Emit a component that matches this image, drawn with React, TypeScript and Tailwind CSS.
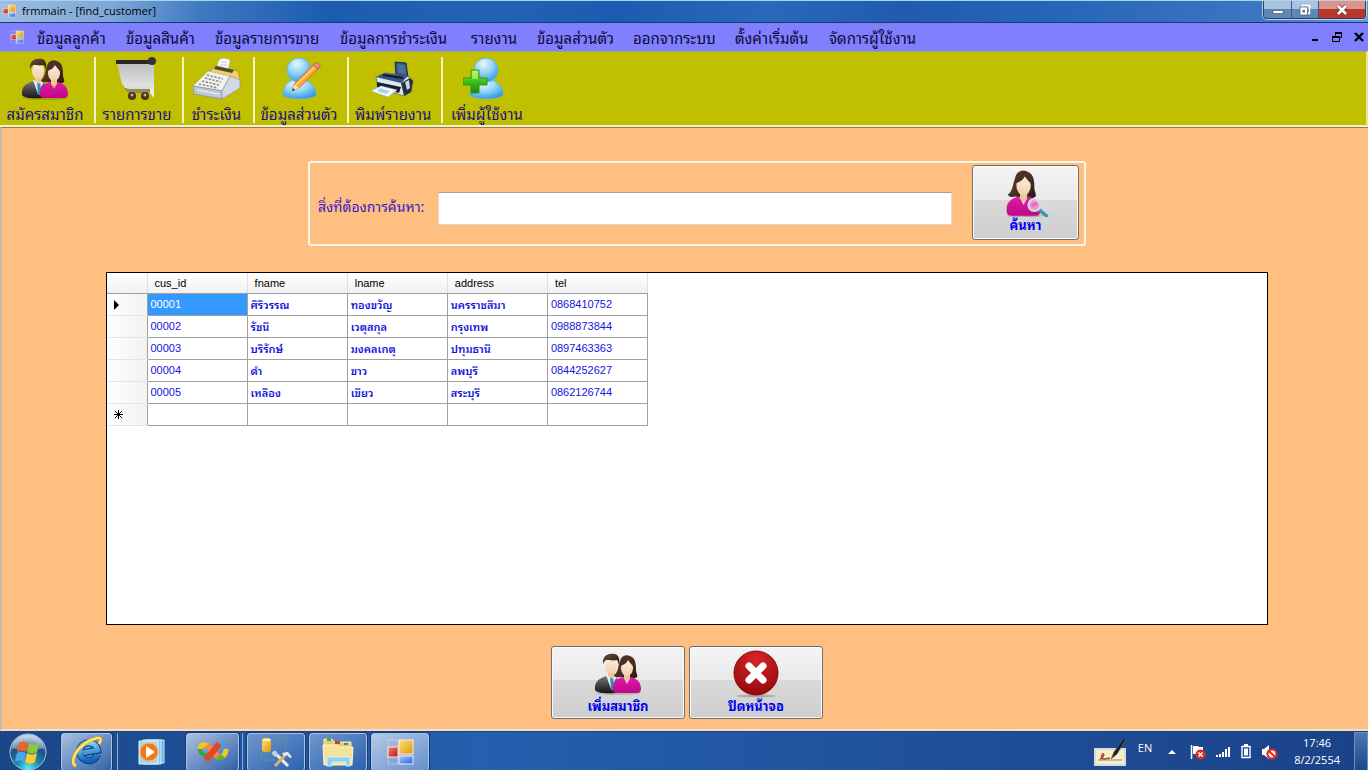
import type { ReactNode } from "react";

const menuItems = [
  "ข้อมูลลูกค้า",
  "ข้อมูลสินค้า",
  "ข้อมูลรายการขาย",
  "ข้อมูลการชำระเงิน",
  "รายงาน",
  "ข้อมูลส่วนตัว",
  "ออกจากระบบ",
  "ตั้งค่าเริ่มต้น",
  "จัดการผู้ใช้งาน",
];

const columns = ["cus_id", "fname", "lname", "address", "tel"];

const customers = [
  ["00001", "ศิริวรรณ", "ทองขวัญ", "นครราชสีมา", "0868410752"],
  ["00002", "รัชนี", "เวตุสกุล", "กรุงเทพ", "0988873844"],
  ["00003", "บริรักษ์", "มงคลเกตุ", "ปทุมธานี", "0897463363"],
  ["00004", "ดำ", "ขาว", "ลพบุรี", "0844252627"],
  ["00005", "เหลือง", "เขียว", "สระบุรี", "0862126744"],
];

/* shared gradients, referenced by id from every icon */
const Gradients = () => (
  <svg className="absolute h-0 w-0" aria-hidden="true">
    <defs>
      <linearGradient id="hair" x1="0" y1="0" x2="1" y2="1">
        <stop offset="0" stopColor="#6b4a38" />
        <stop offset="1" stopColor="#2a1812" />
      </linearGradient>
      <linearGradient id="pink" x1="0" y1="0" x2="0" y2="1">
        <stop offset="0" stopColor="#e01aa8" />
        <stop offset="1" stopColor="#c00888" />
      </linearGradient>
      <linearGradient id="suit" x1="0" y1="0" x2="0" y2="1">
        <stop offset="0" stopColor="#777" />
        <stop offset="1" stopColor="#151515" />
      </linearGradient>
      <linearGradient id="skin" x1="0" y1="0" x2="0" y2="1">
        <stop offset="0" stopColor="#fdeedd" />
        <stop offset="1" stopColor="#f3cfa9" />
      </linearGradient>
      <linearGradient id="cart" x1="0" y1="0" x2="0" y2="1">
        <stop offset="0" stopColor="#bdbdbd" />
        <stop offset="1" stopColor="#f4f4f4" />
      </linearGradient>
      <radialGradient id="sky" cx="0.4" cy="0.25" r="0.8">
        <stop offset="0" stopColor="#e6f8ff" />
        <stop offset="0.5" stopColor="#8fd2f8" />
        <stop offset="1" stopColor="#2a94e8" />
      </radialGradient>
      <linearGradient id="plus" x1="0" y1="0" x2="0" y2="1">
        <stop offset="0" stopColor="#b4f04a" />
        <stop offset="0.5" stopColor="#3fc01c" />
        <stop offset="1" stopColor="#168a0c" />
      </linearGradient>
      <radialGradient id="red" cx="0.5" cy="0.2" r="0.9">
        <stop offset="0" stopColor="#d8262a" />
        <stop offset="1" stopColor="#8e0508" />
      </radialGradient>
      <radialGradient id="orb" cx="0.5" cy="0.95" r="0.9">
        <stop offset="0" stopColor="#5af0f8" />
        <stop offset="0.35" stopColor="#1e88b0" />
        <stop offset="0.7" stopColor="#1c4f80" />
        <stop offset="1" stopColor="#b8cfe4" />
      </radialGradient>
      <linearGradient id="gold" x1="0" y1="0" x2="1" y2="1">
        <stop offset="0" stopColor="#ffe27a" />
        <stop offset="1" stopColor="#dc9604" />
      </linearGradient>
      <linearGradient id="blue" x1="0" y1="0" x2="1" y2="1">
        <stop offset="0" stopColor="#a8c6ff" />
        <stop offset="1" stopColor="#2c5ed8" />
      </linearGradient>
      <linearGradient id="brick" x1="0" y1="0" x2="1" y2="1">
        <stop offset="0" stopColor="#f08878" />
        <stop offset="1" stopColor="#b41414" />
      </linearGradient>
      <linearGradient id="iebody" x1="0" y1="0" x2="0" y2="1">
        <stop offset="0" stopColor="#8ad4f8" />
        <stop offset="1" stopColor="#0f62bc" />
      </linearGradient>
    </defs>
  </svg>
);

const FormIcon = ({ className = "h-3.5 w-3.5" }) => (
  <svg viewBox="0 0 28 28" className={className} aria-hidden="true">
    <path d="M2 2h10v24H2z" fill="none" stroke="#d8d4dc" strokeDasharray="2 1.500" />
    <rect x="13" y="2" width="14" height="14" fill="url(#gold)" stroke="#fff0c8" />
    <rect x="2" y="9" width="10" height="10" fill="url(#brick)" stroke="#ffe0dc" />
    <rect x="13" y="18" width="14" height="8" fill="url(#blue)" stroke="#e8eeff" />
  </svg>
);

const Woman = () => (
  <g>
    <path d="M26 9c1-5 6-7 10-5 6 2 6 9 6 14 0 3 2 5 1 7-4 3-8 1-10 1l-7-1c-3 1-6 0-6-2 4-2 4-9 6-14z" fill="url(#hair)" />
    <path d="M30 20h6v9h-6z" fill="#eec49c" />
    <ellipse cx="33" cy="16" rx="6" ry="8" fill="url(#skin)" />
    <path d="M26 14c4-1 7-3 8-6 2 3 4 5 6 7 0-7-3-11-7-11s-7 4-7 10z" fill="#4a2f24" />
    <path d="M19 38c-1-8 3-11 10-13l4 7 4-7c7 2 10 6 10 12 0 3-2 4-4 4H23c-2 0-4-1-4-3z" fill="url(#pink)" />
  </g>
);

const PeopleIcon = () => (
  <svg viewBox="0 0 48 44" className="h-11 w-12 shrink-0" aria-hidden="true">
    <ellipse cx="24" cy="41" rx="22" ry="2" fill="#000" opacity="0.15" />
    <path d="M1 38c-1-8 4-12 12-14h6c5 2 8 6 8 16-8 2-24 2-26-2z" fill="url(#suit)" />
    <path d="M12 23l5 14 6-13z" fill="#e8eef4" />
    <path d="M16 25h3l2 13h-4z" fill="#2d8fb0" />
    <path d="M14 17h7v7l-3 3-4-3z" fill="#eec49c" />
    <ellipse cx="17" cy="14" rx="6" ry="8" fill="url(#skin)" />
    <path d="M9 12C8 3 15 1 21 2c4 1 5 6 4 11-1-2-1-4-2-5-4 1-8 0-11 0-2 1-2 3-3 4z" fill="url(#hair)" />
    <Woman />
  </svg>
);

const FindWomanIcon = () => (
  <svg viewBox="16 2 38 40" className="h-12 w-12 shrink-0" aria-hidden="true">
    <ellipse cx="34" cy="41" rx="15" ry="1" fill="#000" opacity="0.2" />
    <Woman />
    <path d="M46 36l6 5" stroke="#3a96b0" strokeWidth="3" strokeLinecap="round" />
    <circle cx="42" cy="32" r="5" fill="#f6c6e8" fillOpacity="0.75" stroke="#d8dde2" strokeWidth="1.600" />
    <path d="M39 33c1-4 3-4 6-3-1 3-3 5-6 3z" fill="#e85ab8" opacity="0.7" />
  </svg>
);

const CartIcon = () => (
  <svg viewBox="0 0 48 44" className="h-11 w-12 shrink-0" aria-hidden="true">
    <path d="M4 6h37v35l-4-5H15l-4-7-2-2z" fill="url(#cart)" />
    <path d="M11 31h26v5H15z" fill="#8f8f60" />
    <path d="M14 29h24v3H14z" fill="#dcdcd4" />
    <path d="M3 3h34v4H3z" fill="#292725" />
    <circle cx="39" cy="4" r="4" fill="#353230" />
    <circle cx="19" cy="39" r="4" fill="#4a3418" />
    <circle cx="32" cy="39" r="4" fill="#4a3418" />
    <circle cx="19" cy="38" r="1.500" fill="#b8b0a0" />
    <circle cx="32" cy="38" r="1.500" fill="#b8b0a0" />
  </svg>
);

const RegisterIcon = () => (
  <svg viewBox="0 0 48 44" className="h-11 w-12 shrink-0" aria-hidden="true">
    <path d="M23 12l3-9c3-2 6-2 11 0l-2 10z" fill="#fbfbfb" stroke="#c8c8c0" strokeWidth="0.7" />
    <path d="M28 5h6M27 8h7" stroke="#bbb" strokeWidth="0.8" />
    <path d="M15 15l8-6 22 5 2 8-3 5-18-6z" fill="#f0d060" stroke="#a08430" strokeWidth="0.7" />
    <path d="M21 12l18 4 2-3-18-4z" fill="#4b4a3c" />
    <path d="M0 29l15-15 22 5-8 15z" fill="#f2f1ea" stroke="#aaa99c" strokeWidth="0.7" />
    <path d="M0 29l29 5v8L1 37z" fill="#bcc9dc" stroke="#7e8ba0" strokeWidth="0.7" />
    <path d="M29 34l8-15 10 4v8L29 42z" fill="#d3d9e2" stroke="#8c96a6" strokeWidth="0.7" />
    <path d="M14 18l16 4M12 21l16 4M9 24l17 4M6 27l19 4" stroke="#8a8e94" strokeWidth="1.600" strokeDasharray="2.400 1.400" />
    <path d="M4 33l22 4" stroke="#f2f6fa" strokeWidth="1" />
  </svg>
);

const Person = () => (
  <g stroke="#58b0e8" strokeWidth="0.8">
    <path d="M8 38c0-10 6-16 16-16s17 7 17 16c-4 5-28 5-33 0z" fill="url(#sky)" />
    <circle cx="24" cy="13" r="12" fill="url(#sky)" />
  </g>
);

const ProfileIcon = () => (
  <svg viewBox="0 0 48 44" className="h-11 w-12 shrink-0" aria-hidden="true">
    <Person />
    <path d="M17 34l2-7L38 8l5 4-19 19z" fill="#f9a436" stroke="#bd6817" strokeWidth="0.7" />
    <path d="M21 28L40 10" stroke="#ffd78a" strokeWidth="1.500" />
    <path d="M17 34l2-7 5 4z" fill="#fbe0b8" />
    <path d="M17 34l1-3 2 2z" fill="#333" />
    <path d="M38 8l2-2c3-1 6 2 5 4l-2 2z" fill="#ee8888" stroke="#c0504c" strokeWidth="0.7" />
  </svg>
);

const AddUserIcon = () => (
  <svg viewBox="4 0 48 44" className="h-11 w-12 shrink-0" aria-hidden="true">
    <g transform="translate(3 0)">
      <Person />
    </g>
    <path d="M12 13h8v8h8v7h-8v8h-8v-8H4v-7h8z" fill="url(#plus)" stroke="#2c9818" />
    <path d="M13 14h6v8h-6z" fill="#ccf880" opacity="0.5" />
  </svg>
);

const PrinterIcon = () => (
  <svg viewBox="0 0 48 44" className="h-11 w-12 shrink-0" aria-hidden="true">
    <path d="M26 5l11 1 2 14-12-2z" fill="#31517e" stroke="#1c2e4c" />
    <path d="M28 7l8 1 1 9-8-1z" fill="#4a6e9e" />
    <path d="M7 20l9-4 22 3 6 4-2 12-7 4-26-8z" fill="#dfe7ef" stroke="#4c5c70" strokeWidth="0.7" />
    <path d="M7 20l9-4 23 3-7 7z" fill="#35557e" />
    <path d="M14 18l20 3" stroke="#0e1a2c" strokeWidth="2" />
    <path d="M32 26l9-5 3 3-2 11-7 4z" fill="#26303e" />
    <path d="M36 25l4-2 1 8-3 2z" fill="#c8d4e0" />
    <path d="M8 25l24 5-2 6-22-6z" fill="#16202e" />
    <path d="M12 29l16 4-9 7-17-6z" fill="#f4faff" stroke="#9cb4c8" strokeWidth="0.7" />
    <path d="M11 31l10 3-4 3-9-3z" fill="#a8d4f0" />
  </svg>
);

const CloseCircleIcon = () => (
  <svg viewBox="0 0 48 48" className="h-12 w-12 shrink-0" aria-hidden="true">
    <ellipse cx="24" cy="46" rx="20" ry="1.500" fill="#000" opacity="0.2" />
    <circle cx="24" cy="23" r="22" fill="url(#red)" stroke="#84080a" />
    <path d="M17 16l14 14M31 16L17 30" stroke="#fff" strokeWidth="7" strokeLinecap="round" />
  </svg>
);

const toolbar = [
  { label: "สมัครสมาชิก", icon: <PeopleIcon /> },
  { label: "รายการขาย", icon: <CartIcon /> },
  { label: "ชำระเงิน", icon: <RegisterIcon /> },
  { label: "ข้อมูลส่วนตัว", icon: <ProfileIcon /> },
  { label: "พิมพ์รายงาน", icon: <PrinterIcon /> },
  { label: "เพิ่มผู้ใช้งาน", icon: <AddUserIcon /> },
];

const TitleBar = () => (
  <header className="flex h-[23px] items-start justify-between border-t border-b border-t-[#a9d4f0] border-b-[#16387c] bg-[linear-gradient(100deg,#9dbde2_0%,#7fa8d8_8%,#3d78c0_15%,#1c5cb0_24%,#2462b6_36%,#1d5bb2_45%,#2a68ba_56%,#1f5cae_66%,#2866b8_78%,#3c78c2_93%,#6d9ad0_100%)] pr-0.5 pl-0.5">
    <div className="flex h-5 items-center gap-1.5">
      <FormIcon />
      <h1 className="font-['Open_Sans',sans-serif] text-[11px] leading-5 text-black">
        frmmain - [find_customer]
      </h1>
    </div>
    <div className="flex h-[18px] overflow-hidden rounded-b border border-t-0 border-[#26406c] shadow-[0_0_0_1px_#b8cfe8]">
      <button aria-label="Minimize" className="flex w-7 items-center justify-center border-r border-[#3c5880] bg-linear-to-b from-[#a9c4e0] from-50% to-[#5f86b4] to-50%">
        <svg viewBox="0 0 12 12" className="h-3 w-3"><path d="M1 6.500h10v3H1z" fill="#fff" stroke="#4a5a70" strokeWidth="0.7" /></svg>
      </button>
      <button aria-label="Restore" className="flex w-[27px] items-center justify-center border-r border-[#3c5880] bg-linear-to-b from-[#a9c4e0] from-50% to-[#5f86b4] to-50%">
        <svg viewBox="0 0 14 14" className="h-3.5 w-3.5">
          <path d="M4.500 2.500h7v8h-7z" fill="none" stroke="#fff" strokeWidth="1.500" />
          <path d="M2 4h7.500v8H2z" fill="#fff" stroke="#4a5a70" strokeWidth="0.7" />
          <path d="M4.500 7h2.500v2.500H4.500z" fill="#5d7390" />
        </svg>
      </button>
      <button aria-label="Close" className="flex w-[46px] items-center justify-center bg-linear-to-b from-[#dc9488] from-50% to-[#b8362a] to-50%">
        <svg viewBox="0 0 14 12" className="h-3 w-3.5">
          <path d="M3 2l8 8M11 2l-8 8" stroke="#5c3434" strokeWidth="4" />
          <path d="M3 2l8 8M11 2l-8 8" stroke="#fff" strokeWidth="2.600" />
        </svg>
      </button>
    </div>
  </header>
);

const MenuBar = () => (
  <nav className="flex h-7 items-center justify-between bg-[#8080ff] pr-1 pl-2.5">
    <div className="flex items-center">
      <FormIcon className="mr-[13px] h-3.5 w-3.5" />
      <div className="grid grid-cols-[89px_89px_125px_131px_66px_96px_102px_94px_auto] justify-items-start">
        {menuItems.map((item) => (
          <button key={item} className="whitespace-nowrap text-[15px] leading-7 text-[#0c0838]">
            {item}
          </button>
        ))}
      </div>
    </div>
    <div className="flex items-center gap-3 text-black">
      <button aria-label="Minimize child">
        <svg viewBox="0 0 10 10" className="h-2.5 w-2.5"><path d="M2 7h6v2H2z" /></svg>
      </button>
      <button aria-label="Restore child">
        <svg viewBox="0 0 10 10" className="h-2.5 w-2.5" fill="none" stroke="#000">
          <path d="M3.500 3.500V1.500h6v4h-2" />
          <path d="M3 1h7" strokeWidth="2" />
          <path d="M.5 4.500h7v5h-7z" />
          <path d="M0 5h8" strokeWidth="2" />
        </svg>
      </button>
      <button aria-label="Close child">
        <svg viewBox="0 0 10 10" className="h-2.5 w-2.5"><path d="M1 1l8 8M9 1L1 9" stroke="#000" strokeWidth="2.400" /></svg>
      </button>
    </div>
  </nav>
);

const ToolBar = () => (
  <div className="grid h-[76px] grid-cols-[96px_88px_71px_94px_94px_92px] border-t border-r-2 border-b-2 border-t-[#a8a468] border-r-[#e8e4a0] border-b-[#f4f0c0] bg-[#c0c000] pt-[5px]">
    {toolbar.map(({ label, icon }, i) => (
      <button
        key={label}
        className={`flex h-[66px] flex-col items-center justify-start whitespace-nowrap pr-1 text-[15px] text-[#20107c] ${
          i < toolbar.length - 1 ? "border-r-2 border-[#f4f2c8]" : ""
        }`}
      >
        {icon}
        <span className="leading-6">{label}</span>
      </button>
    ))}
  </div>
);

type ActionProps = { label: string; icon: ReactNode; className: string };

const ActionButton = ({ label, icon, className }: ActionProps) => (
  <button
    className={`flex flex-col items-center justify-start rounded-[3px] border border-[#707070] bg-[linear-gradient(#f4f4f4_0%,#e9e9e9_46%,#dadada_47%,#cecece_100%)] pt-[3px] text-[13px] font-bold text-[#0000f0] shadow-[inset_0_0_0_1px_#fafafa] ${className}`}
  >
    <span className="flex h-12 items-center">{icon}</span>
    <span className="leading-4">{label}</span>
  </button>
);

const CustomerGrid = () => (
  <div className="min-h-[353px] flex-1 border border-black bg-white">
    <table className="w-[541px] table-fixed border-collapse text-left text-[11px]">
      <thead className="font-['Liberation_Sans',sans-serif]">
        <tr className="h-5 bg-linear-to-b from-white to-[#f0f0f2]">
          <th className="w-10 border-r border-b border-r-[#e0e0e4] border-b-[#a0a0a0]"></th>
          {columns.map((name) => (
            <th key={name} className="border-r border-b border-r-[#e0e0e4] border-b-[#a0a0a0] py-0 pl-[7px] font-normal leading-5 text-black">
              {name}
            </th>
          ))}
        </tr>
      </thead>
      <tbody className="text-[#1414dc]">
        {customers.map((row, r) => (
          <tr key={row[0]} className="h-[22px]">
            <th className="border-r border-b border-r-[#a0a0a0] border-b-[#e4e4e8] bg-linear-to-r from-white to-[#f1f2f4] p-0 pl-[7px]">
              {r === 0 && (
                <svg viewBox="0 0 5 10" className="h-2.5 w-[5px]"><path d="M0 0l5 5-5 5z" /></svg>
              )}
            </th>
            {row.map((cell, c) => (
              <td
                key={columns[c]}
                className={`whitespace-nowrap border border-[#a0a0a0] px-[3px] pt-0 pb-0.5 leading-4 ${
                  r === 0 && c === 0 ? "bg-[#3399ff] text-white" : ""
                } ${c === 0 || c === 4 ? "font-['Liberation_Sans',sans-serif]" : "font-semibold"}`}
              >
                {cell}
              </td>
            ))}
          </tr>
        ))}
        <tr className="h-[22px]">
          <th className="border-r border-b border-r-[#a0a0a0] border-b-[#e4e4e8] bg-linear-to-r from-white to-[#f1f2f4] p-0 pl-[7px]">
            <svg viewBox="0 0 9 9" className="h-[9px] w-[9px]">
              <path d="M4.500 0v9M0 4.500h9M1 1l7 7M8 1L1 8" stroke="#000" />
            </svg>
          </th>
          {columns.map((name) => (
            <td key={name} className="border border-[#a0a0a0]"></td>
          ))}
        </tr>
      </tbody>
    </table>
  </div>
);

const StartOrb = () => (
  <svg viewBox="0 0 38 38" className="h-[38px] w-[38px]" aria-hidden="true">
    <circle cx="19" cy="19" r="18" fill="url(#orb)" stroke="#a4c4de" />
    <path d="M3 15C5 6 12 3 19 3s14 3 16 12c-9 3-23 3-32 0z" fill="#fff" opacity="0.3" />
    <path d="M10 10c3-2 6-2 9 0l-2 9c-3-2-6-2-9 0z" fill="#f2602a" />
    <path d="M20 10c3 2 6 2 10 0l-2 9c-3 2-7 2-10 0z" fill="#8cc83c" />
    <path d="M8 20c3-2 6-2 9 0l-2 9c-3-2-6-2-9 0z" fill="#48a8ec" />
    <path d="M18 20c3 2 6 2 10 0l-2 9c-3 2-7 2-10 0z" fill="#fccc30" />
  </svg>
);

const IeIcon = () => (
  <svg viewBox="0 0 32 32" className="h-8 w-8" aria-hidden="true">
    <g fill="none" transform="rotate(-10 17 17)">
      <path d="M26 20a9 9 0 1 1 1-4H12" stroke="#0a3c80" strokeWidth="7" />
      <path d="M26 20a9 9 0 1 1 1-4H12" stroke="url(#iebody)" strokeWidth="5" />
    </g>
    <path d="M5 30C-3 27 6 7 26 2c5-1 4 3 2 6" fill="none" stroke="#c89a14" strokeWidth="3.600" />
    <path d="M5 30C-3 27 6 7 26 2c5-1 4 3 2 6" fill="none" stroke="#ffe468" strokeWidth="2.400" />
  </svg>
);

const MediaIcon = () => (
  <svg viewBox="0 0 28 28" className="h-7 w-7" aria-hidden="true">
    <path d="M8 2h18v23H8z" fill="#6aaede" stroke="#c8e6f8" />
    <path d="M5 2h18v24H5z" fill="#8cc6ea" stroke="#d8eefa" />
    <path d="M1 3h19v23H1z" fill="#a8d4ee" stroke="#e4f4fc" />
    <circle cx="11" cy="14" r="9" fill="#f07818" stroke="#ffb468" />
    <path d="M8 8l9 6-9 6z" fill="#fff" />
  </svg>
);

const StudioIcon = () => (
  <svg viewBox="0 0 32 22" className="h-[22px] w-8" aria-hidden="true" fill="none" strokeWidth="5">
    <path d="M13 8C10 2 3 2 3 8" stroke="#f8c020" />
    <path d="M3 8c0 6 6 8 11 4" stroke="#3aa444" strokeWidth="4" />
    <path d="M20 5c4-3 9-1 9 4" stroke="#4c98e4" strokeWidth="4" />
    <path d="M29 8c0 5-2 7-5 8" stroke="#f4c81c" />
    <path d="M26 15c-3 3-6 2-8-1" stroke="#5ab434" />
    <path d="M10 4l11 12" stroke="#f8844c" strokeWidth="6" />
    <path d="M9 19L22 3" stroke="#e4481c" strokeWidth="6" />
  </svg>
);

const DatabaseToolsIcon = () => (
  <svg viewBox="0 0 32 32" className="h-8 w-8" aria-hidden="true">
    <path d="M14 3h12v11M2 16v8h12" fill="none" stroke="#58b070" strokeDasharray="2 1.500" />
    <path d="M2 4v10c0 3 9 3 9 0V4z" fill="url(#gold)" />
    <ellipse cx="6.500" cy="4" rx="4.500" ry="2" fill="#fff0a0" stroke="#d8a828" strokeWidth="0.6" />
    <path d="M14 16l14 14" stroke="#e8edf2" strokeWidth="3" />
    <path d="M27 17L15 30" stroke="#d8b46c" strokeWidth="3" />
    <path d="M22 17l6-1 4 5-2 1-3-3-3 1z" fill="#e6ebf0" />
    <path d="M12 18c0-3 2-4 4-3l2 4-3 2z" fill="#c8d2dc" />
  </svg>
);

const FolderIcon = () => (
  <svg viewBox="0 0 32 30" className="h-[30px] w-8" aria-hidden="true">
    <path d="M2 2h8l2 3h17v20H2z" fill="#e8cc74" stroke="#f8eebc" />
    <path d="M5 1h4v3H5z" fill="#3cac50" />
    <path d="M13 4h5v3h-5z" fill="#c04830" />
    <path d="M22 6h4v2h-4z" fill="#3c80cc" />
    <path d="M1 8h13l3 2h14l-1 18H2z" fill="#f6e39a" stroke="#fff4c4" />
    <path d="M5 29V20h23v9h-4v-4H10v4z" fill="#8ed0ee" stroke="#d4f0fa" />
  </svg>
);

const taskButton =
  "flex h-[38px] items-center justify-center rounded-[3px] border border-[#a9c3e4] shadow-[0_0_0_1px_#143a78]";

const TaskBar = () => (
  <footer className="flex h-10 items-center justify-between border-t border-[#27406c] bg-linear-to-r from-[#1a4587] via-[#2460ae] via-35% to-[#1b4288] text-white">
    <div className="flex items-center gap-1">
      <button aria-label="Start" className="mr-2.5 ml-[9px]"><StartOrb /></button>
      <button aria-label="Internet Explorer" className={`${taskButton} w-[51px] bg-linear-to-br from-[#a9bfe0] to-[#3463a8]`}>
        <IeIcon />
      </button>
      <div className="-ml-1 h-[38px] w-1.5 border-r border-[#8cacd6]" />
      <button aria-label="Media Player" className="flex h-[38px] w-[60px] items-center justify-center"><MediaIcon /></button>
      <button aria-label="Visual Studio" className={`${taskButton} w-[53px] bg-linear-to-br from-[#aec2e2] to-[#2f60a8]`}>
        <StudioIcon />
      </button>
      <div className="-ml-1 h-[38px] w-1 border-r border-[#8cacd6]" />
      <button aria-label="SQL Server" className={`${taskButton} w-[58px] bg-linear-to-br from-[#6f96cc] to-[#2c62b0]`}>
        <DatabaseToolsIcon />
      </button>
      <button aria-label="Explorer" className={`${taskButton} w-[58px] bg-linear-to-br from-[#6f96cc] to-[#2c62b0]`}>
        <FolderIcon />
      </button>
      <button aria-label="frmmain" className={`${taskButton} w-[58px] bg-linear-to-br from-[#b4cae8] to-[#6890ca]`}>
        <FormIcon className="h-7 w-7" />
      </button>
    </div>
    <div className="flex h-full items-center gap-2.5 font-['Open_Sans',sans-serif] text-[11px]">
      <svg viewBox="0 0 34 30" className="h-[30px] w-[34px]" aria-hidden="true">
        <path d="M1 12h30v16H1z" fill="#f4efc8" stroke="#d8dcdc" strokeWidth="2" />
        <path d="M4 23h24" stroke="#8a8a74" />
        <path d="M6 22c3-1 5-5 3-5s-2 5 1 5 4-1 6-1" fill="none" stroke="#b03c30" strokeWidth="1.400" />
        <path d="M17 22l3-7L30 1l2 1-9 15z" fill="#1a1c20" stroke="#5c646c" strokeWidth="0.6" />
      </svg>
      <span className="pb-1.5">EN</span>
      <button aria-label="Show hidden icons" className="mr-1 ml-1.5">
        <svg viewBox="0 0 8 5" className="h-[5px] w-2"><path d="M0 5l4-4 4 4z" fill="#fff" /></svg>
      </button>
      <svg viewBox="0 0 16 16" className="h-4 w-4" aria-hidden="true">
        <path d="M1.500 1v14" stroke="#fff" strokeWidth="1.500" />
        <path d="M3 2h5l1 1h4v7H3z" fill="#fff" />
        <circle cx="10.500" cy="10.500" r="5" fill="#e02c20" />
        <path d="M8.500 8.500l4 4M12.500 8.500l-4 4" stroke="#fff" strokeWidth="1.500" />
      </svg>
      <svg viewBox="0 0 15 14" className="h-3.5 w-[15px]" aria-hidden="true" fill="#fff">
        <path d="M0 10h2v2H0zM3 9h2v3H3zM6 7h2v5H6zM9 4h2v8H9zM12 2h2v10h-2z" />
      </svg>
      <svg viewBox="0 0 10 15" className="h-[15px] w-2.5" aria-hidden="true">
        <path d="M3 0h4v2H3z" fill="#fff" />
        <path d="M1 2.500h8v11H1z" fill="none" stroke="#fff" strokeWidth="1.400" />
        <path d="M3 4.500h4v7H3z" fill="#fff" />
      </svg>
      <svg viewBox="0 0 17 16" className="mr-1.5 h-4 w-[17px]" aria-hidden="true">
        <path d="M1 5h2l5-4v14l-5-4H1z" fill="#fff" />
        <circle cx="11" cy="10" r="4.500" fill="#fff" stroke="#e02c20" strokeWidth="2.200" />
        <path d="M8 7l6 6" stroke="#e02c20" strokeWidth="2.200" />
      </svg>
      <time className="mr-1 pb-0.5 text-center leading-[17px]">
        17:46
        <br />
        8/2/2554
      </time>
      <button aria-label="Show desktop" className="h-full w-3.5 border border-[#6c8fc0] bg-linear-to-b from-[#4c78b4] to-[#1c4688]" />
    </div>
  </footer>
);

const App = () => {
  return (
    <div className="flex min-h-screen flex-col font-['Noto_Sans_Thai_Looped','Loma','Waree','Noto_Sans_Thai','Noto_Sans',sans-serif]">
      <Gradients />
      <TitleBar />
      <MenuBar />
      <ToolBar />
      <main className="flex flex-1 flex-col border-t border-b-2 border-l-2 border-t-[#8c7c60] border-b-[#e6e2da] border-l-[#c8b8a8] bg-[#ffbf80] pt-[33px] pr-[100px] pb-2.5 pl-[104px]">
        <form
          className="ml-5 flex h-[85px] w-[778px] items-start self-center rounded-[3px] border-2 border-[#fff6ea] pt-0.5 pl-2"
          onSubmit={(e) => e.preventDefault()}
        >
          <div className="flex items-center pt-[27px]">
            <label htmlFor="keyword" className="w-[120px] whitespace-nowrap pb-1.5 text-[14px] leading-5 text-[#3a18c4]">
              สิ่งที่ต้องการค้นหา:
            </label>
            <input
              id="keyword"
              type="text"
              className="h-[33px] w-[514px] border border-[#e4d8cc] border-t-[#a8a098] bg-white px-2 text-[15px] outline-none"
            />
          </div>
          <ActionButton label="ค้นหา" icon={<FindWomanIcon />} className="ml-5 h-[75px] w-[107px]" />
        </form>
        <div className="mt-[26px] flex flex-1 flex-col">
          <CustomerGrid />
        </div>
        <div className="mt-[21px] flex justify-center gap-1">
          <ActionButton label="เพิ่มสมาชิก" icon={<PeopleIcon />} className="h-[73px] w-[134px]" />
          <ActionButton label="ปิดหน้าจอ" icon={<CloseCircleIcon />} className="h-[73px] w-[134px]" />
        </div>
      </main>
      <TaskBar />
    </div>
  );
};

export default App;
